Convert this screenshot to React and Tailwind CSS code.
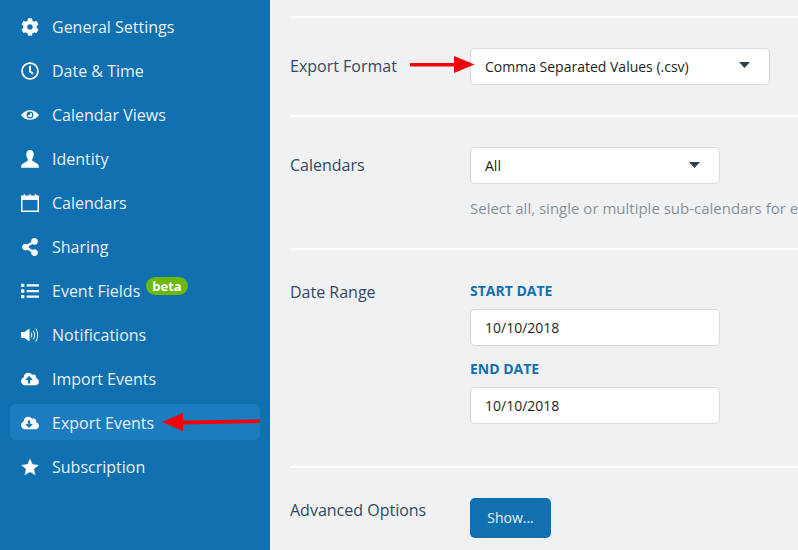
import { FaCog, FaRegClock, FaShareAlt, FaList, FaCloudUploadAlt, FaCloudDownloadAlt } from 'react-icons/fa';

const EyeIcon = () => (
  <svg width="18" height="18" viewBox="0 0 18 18" fill="currentColor">
    <path fillRule="evenodd" d="M0 9C2.500 5.700 5.500 4.200 9 4.200S15.500 5.700 18 9c-2.500 3.300-5.500 4.800-9 4.800S2.500 12.300 0 9zm9-3.400a3.400 3.400 0 1 0 0 6.800 3.400 3.400 0 0 0 0-6.800z" />
    <path d="M9 6.800a2.200 2.200 0 1 1-2.200 2.200H9V6.800z" />
  </svg>
);

const IdentityIcon = () => (
  <svg width="18" height="18" viewBox="0 0 18 18" fill="currentColor">
    <path d="M9 0C6.300 0 5.300 2 5.300 4.500c0 1.900.7 3.300 1.400 4.400.3.600.2 1.700-.4 2.200C5 12.300 1.500 13.300.6 14.800L0 17.700h18l-.6-2.900c-.9-1.500-4.400-2.500-5.700-3.700-.6-.5-.7-1.600-.4-2.200.7-1.100 1.400-2.500 1.400-4.400C12.700 2 11.700 0 9 0z" />
  </svg>
);

const CalendarIcon = () => (
  <svg width="18" height="18" viewBox="0 0 18 18" fill="currentColor">
    <path d="M0 1.500h18V18H0V1.500zM1.500 6v10.500h15V6h-15z" fillRule="evenodd" />
    <rect x="2.800" y="0" width="1.200" height="2.500" />
    <rect x="8.400" y="0" width="1.200" height="2.500" />
    <rect x="14" y="0" width="1.200" height="2.500" />
  </svg>
);

const VolumeIcon = () => (
  <svg width="18" height="18" viewBox="0 0 18 18" fill="currentColor">
    <path d="M0 6h3.500L8.500 2.500v13L3.500 12H0z" />
    <g fill="none" stroke="currentColor" strokeWidth="1" strokeLinecap="round">
      <path d="M10.300 6.800c.7 1.300.7 3.100 0 4.400" />
      <path d="M12.600 5c1.300 2.300 1.300 5.700 0 8" />
      <path d="M15 2.800c2.200 3.700 2.200 8.700 0 12.400" />
    </g>
  </svg>
);

const StarIcon = () => (
  <svg width="18" height="18" viewBox="0 0 18 18" fill="currentColor">
    <path d="M9 .5l2.500 5.800 6.300.6-4.800 4.100 1.500 6.200L9 13.900l-5.500 3.300L5 11 .2 6.900l6.300-.6z" />
  </svg>
);

const navItems = [
  { label: 'General Settings', icon: <FaCog size={18} /> },
  { label: 'Date & Time', icon: <FaRegClock size={18} /> },
  { label: 'Calendar Views', icon: <EyeIcon /> },
  { label: 'Identity', icon: <IdentityIcon /> },
  { label: 'Calendars', icon: <CalendarIcon /> },
  { label: 'Sharing', icon: <FaShareAlt size={18} /> },
  { label: 'Event Fields', icon: <FaList size={18} />, beta: true },
  { label: 'Notifications', icon: <VolumeIcon /> },
  { label: 'Import Events', icon: <FaCloudUploadAlt size={18} /> },
  { label: 'Export Events', icon: <FaCloudDownloadAlt size={18} />, active: true },
  { label: 'Subscription', icon: <StarIcon /> },
];

const Caret = () => (
  <svg width="11" height="6" viewBox="0 0 11 6" className="mb-[2px] fill-[#2f3f4f]">
    <path d="M0 0h11L5.500 6z" />
  </svg>
);

const Select = ({ value, width }) => (
  <div className={`flex h-[37px] items-center justify-between rounded-[5px] border border-[#d9dadc] bg-white pl-[14px] text-[14px] text-[#1d1d1d] ${width}`}>
    <span>{value}</span>
    <Caret />
  </div>
);

const DateInput = ({ value }) => (
  <div className="flex h-[37px] w-[250px] items-center rounded-[5px] border border-[#d9dadc] bg-white pl-[14px] text-[14px] text-[#1d1d1d]">
    {value}
  </div>
);

const Divider = () => <div className="h-[2px] bg-white" />;

const RowLabel = ({ children, className }) => (
  <div className={`w-[180px] shrink-0 text-[16px] leading-[22px] text-[#34495e] ${className}`}>{children}</div>
);

export default function App() {
  return (
    <div className="relative flex h-[550px] w-[798px] overflow-hidden bg-[#f0f1f3] font-['Open_Sans',sans-serif]">
      <nav className="w-[270px] shrink-0 bg-[#1070b0] px-[10px] pt-[9px] text-white">
        {navItems.map((item) => (
          <div
            key={item.label}
            className={`flex h-9 items-center rounded-[6px] pl-[11px] ${item.active ? '-mt-[1px] mb-[9px] bg-[#1c7cc0] pt-[2px]' : 'mb-2'}`}
          >
            <span className="flex w-[18px] justify-center">{item.icon}</span>
            <span className="ml-[13px] text-[16px] text-[#e8f2f8]">{item.label}</span>
            {item.beta && (
              <span className="mb-[10px] ml-[6px] rounded-full bg-[#6cb80c] px-[6px] text-[13px] leading-[18px] font-bold text-white">beta</span>
            )}
          </div>
        ))}
      </nav>

      <main className="min-w-0 flex-1 pt-4 pl-5">
        <Divider />
        <div className="flex h-[97px] items-center pb-[1px]">
          <RowLabel className="mb-[1px]">Export Format</RowLabel>
          <Select value="Comma Separated Values (.csv)" width="w-[300px] pr-[19px]" />
        </div>
        <Divider />
        <div className="flex h-[131px] pt-[30px]">
          <RowLabel className="mt-[7px]">Calendars</RowLabel>
          <div className="min-w-0">
            <Select value="All" width="w-[250px] pr-[19px]" />
            <p className="mt-[14px] text-[15px] leading-[20px] whitespace-nowrap text-[#8a9199]">
              Select all, single or multiple sub-calendars for export.
            </p>
          </div>
        </div>
        <Divider />
        <div className="flex h-[216px] pt-[31px]">
          <RowLabel>Date Range</RowLabel>
          <div>
            <div className="text-[14px] leading-[20px] font-bold text-[#1070b0]">START DATE</div>
            <div className="mt-[8px]"><DateInput value="10/10/2018" /></div>
            <div className="mt-[13px] text-[14px] leading-[20px] font-bold text-[#1070b0]">END DATE</div>
            <div className="mt-[8px]"><DateInput value="10/10/2018" /></div>
          </div>
        </div>
        <Divider />
        <div className="flex pt-[30px]">
          <RowLabel className="mt-[1px]">Advanced Options</RowLabel>
          <div className="flex h-10 w-[81px] items-center justify-center rounded-[5px] bg-[#1070b0] pb-[2px] text-[14px] text-[#e8f2f8]">Show...</div>
        </div>
      </main>

      {/* red annotation arrows */}
      <svg className="absolute top-0 left-0" width="798" height="550" fill="#f60008">
        <path d="M410 63h44v-7l20.500 8.500L454 73v-6.500h-44z" />
        <path d="M260 419.500v3.500l-77 1.500V431l-21-9 21-9v7.500z" />
      </svg>
    </div>
  );
}
